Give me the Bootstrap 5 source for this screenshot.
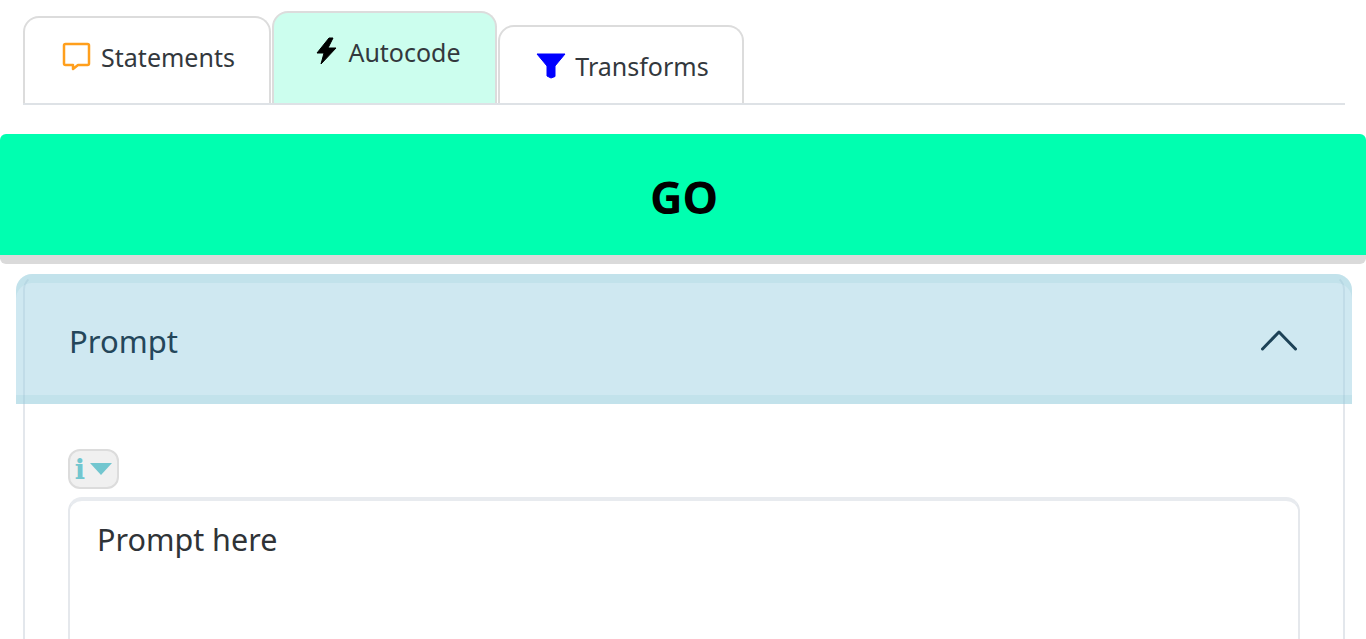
<!DOCTYPE html>
<html lang="en">
<head>
<meta charset="utf-8">
<title>Prompt</title>
<link href="https://cdn.jsdelivr.net/npm/bootstrap@5.3.0/dist/css/bootstrap.min.css" rel="stylesheet">
<style>
html,body{height:639px;overflow:hidden;}
body{font-family:"Noto Sans","Open Sans",sans-serif;color:#2f3337;background:#fff;}
.tabbar{margin:0 21px 0 23px;height:104.5px;border-bottom:2px solid #dee2e6;align-items:flex-end;flex-wrap:nowrap;gap:1px;}
.tabbar .nav-link{display:flex;justify-content:center;align-items:flex-start;gap:10px;border:2px solid #dcdcdc;border-bottom:0;border-radius:16px 16px 0 0;color:#33383d;font-size:25px;line-height:32px;padding:23px 0 0 3px;background:#fff;}
.tabbar .t1{width:248px;height:86.5px;}
.tabbar .t2{width:225px;height:91.5px;background:#ccfeee;padding-left:6px;}
.tabbar .t3{width:246px;height:77.500px;padding-left:2px;}
.t1 svg{margin-top:1px;}
.t3 svg{margin-top:3px;margin-left:1px;margin-right:-1px;}
.gobtn{display:block;width:100%;height:130px;margin-top:29.5px;padding:3px 0 0 2px;background:#00ffb0;border:0;border-bottom:9px solid #dadada;border-radius:6px;color:#000;font-size:45px;font-weight:700;line-height:1;}
.gobtn:hover,.gobtn:active{background:#00ffb0!important;color:#000!important;border-color:#dadada!important;}
.acc{margin:10px 21px 0 23px;border:2px solid #e3e7ec;border-top-color:transparent;border-bottom:0;border-radius:16px 16px 0 0;}
.acc .accordion-header{margin:-2px -9px 0;}
.acc .accordion-button{height:130px;padding:0 55px 0 53px;font-size:31px;line-height:40px;color:#24465a;background:rgba(160,210,228,.5);border-radius:16px 16px 0 0!important;box-shadow:inset 0 9px 0 rgba(90,180,190,.1),inset 0 -9px 0 rgba(90,180,190,.1);}
.acc .accordion-button::after{display:none;}
.acc .accordion-button .hdtext{margin-top:4px;}
.acc .accordion-body{padding:45px 44px 0 43px;}
.infobtn{width:51px;height:40px;padding:0 1px 0 0;background:#f0f0f0;border:2px solid #dcdcdc;border-radius:12px;}
.infobtn:hover{background:#f0f0f0;border-color:#dcdcdc;}
.info-i{font-family:"DejaVu Serif",serif;font-weight:700;font-size:27px;line-height:1;color:#72c6cf;width:12px;}
.promptbox{display:block;margin-top:8px;width:1232px;height:220px;padding:18px 27px;font-size:30.500px;line-height:40px;color:#2f3337;border:2px solid #e5e8ec;border-top:4px solid #e8ebef;border-radius:14px;resize:none;}
.promptbox::placeholder{color:#2f3337;opacity:1;}
</style>
</head>
<body>
<ul class="nav tabbar d-flex">
  <li class="nav-item"><a class="nav-link t1" href="#"><svg width="29" height="30" viewBox="0 0 29 30"><path d="M3.5 2h22a1.500 1.500 0 0 1 1.500 1.500v18a1.500 1.500 0 0 1-1.500 1.500H16l-5 4v-4H3.500A1.500 1.500 0 0 1 2 21.500v-18A1.500 1.500 0 0 1 3.500 2z" fill="none" stroke="#ff9f1c" stroke-width="2.500" stroke-linejoin="round"/></svg><span>Statements</span></a></li>
  <li class="nav-item"><a class="nav-link t2" href="#"><svg width="24" height="32" viewBox="0 0 24 30"><path d="M15 1 3 16h7L7 27 22 11h-8l5-10z" fill="#000" stroke="#000" stroke-linejoin="round"/></svg><span>Autocode</span></a></li>
  <li class="nav-item"><a class="nav-link t3" href="#"><svg width="30" height="27" viewBox="0 0 30 27"><path d="M1 1h28L19 13v10.500l-4 1.500-4-2V13z" fill="#0000ff" stroke="#0000ff" stroke-linejoin="round"/></svg><span>Transforms</span></a></li>
</ul>
<button type="button" class="btn gobtn">GO</button>
<div class="accordion acc">
  <div class="accordion-item border-0 bg-transparent">
    <h2 class="accordion-header">
      <button class="accordion-button d-flex justify-content-between" type="button">
        <span class="hdtext">Prompt</span>
        <svg width="36" height="24" viewBox="0 0 36 24"><path d="M1.500 22 18 5l16.500 17" fill="none" stroke="#1d4257" stroke-width="3" stroke-linecap="round" stroke-linejoin="round"/></svg>
      </button>
    </h2>
    <div class="accordion-body">
      <button type="button" class="btn infobtn d-flex align-items-center justify-content-center gap-1">
        <span class="info-i">i</span>
        <svg width="22" height="12" viewBox="0 0 22 12"><path d="M0 0h22L11 12z" fill="#72c6cf"/></svg>
      </button>
      <textarea class="form-control promptbox" placeholder="Prompt here"></textarea>
    </div>
  </div>
</div>
</body>
</html>
